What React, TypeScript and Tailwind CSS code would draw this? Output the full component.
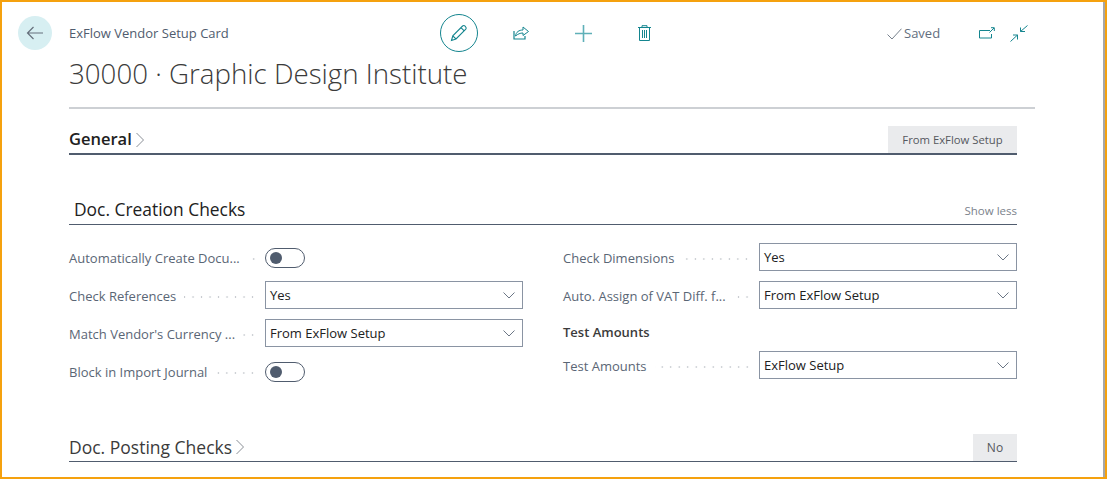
import React from "react";

function Chevron() {
  return (
    <svg width="10" height="16" viewBox="0 0 10 16" fill="none">
      <path d="M1.5 1 L8.5 8 L1.5 15" stroke="#8a8f96" strokeWidth="1" />
    </svg>
  );
}

function Toggle() {
  return (
    <div className="w-[40px] h-[20px] rounded-full border border-[#505c6e] flex items-center pl-[4px]">
      <div className="w-[12px] h-[12px] rounded-full bg-[#505c6e]" />
    </div>
  );
}

function Select({ value }: { value: string }) {
  return (
    <div className="flex-1 -mt-[2px] h-[28px] border border-[#8a94a3] flex items-center justify-between pl-[4px] pr-[7px] text-[13px] text-[#212121]">
      <span className="pt-[2px]">{value}</span>
      <svg width="12" height="7" viewBox="0 0 12 7" fill="none">
        <path d="M0.5 0.5 L6 6 L11.5 0.5" stroke="#6b7685" strokeWidth="1" />
      </svg>
    </div>
  );
}

function Field({ label, children }: { label: string; children: React.ReactNode }) {
  return (
    <div className="h-[38px] flex items-center">
      <div className="w-[196px] pt-[1px] flex items-center text-[13px] text-[#5a6675] pr-[8px] shrink-0">
        <span className="whitespace-nowrap">{label}</span>
        <span className="flex-1 ml-[8px] h-[4px] bg-[radial-gradient(circle,#c6cacf_0.8px,transparent_1.1px)] bg-[length:8.5px_4px] bg-right bg-repeat-x" />
      </div>
      {children}
    </div>
  );
}

export default function App() {
  return (
    <div className="w-[1107px] h-[479px] overflow-hidden border-2 border-[#f5a10e] font-['Open_Sans',sans-serif] bg-white">
      <div className="h-full border-r-2 border-[#a6a6a6] pl-[16px] pt-[12px]">
        {/* header */}
        <div className="flex">
          <div className="w-[34px] h-[34px] mt-[2px] rounded-full bg-[#d7eff2] flex items-center justify-center shrink-0">
            <svg width="18" height="14" viewBox="0 0 18 14" fill="none">
              <path d="M17 7 H1.5 M7.5 1 L1.5 7 L7.5 13" stroke="#66707c" strokeWidth="1.2" />
            </svg>
          </div>
          <div className="ml-[17px] flex-1">
            <div className="flex items-center h-[38px]">
              <div className="w-[371px] pt-[1px] text-[13px] text-[#505c6e] whitespace-nowrap">ExFlow Vendor Setup Card</div>
              <div className="w-[38px] h-[38px] rounded-full border border-[#14858f] flex items-center justify-center">
                <svg width="18" height="18" viewBox="0 0 18 18" fill="none">
                  <path d="M1.5 16.5 L2.8 11.8 L12.6 2 Q13.9 0.9 15.3 2.3 Q16.9 3.9 15.8 5.2 L6 15 Z M2.8 11.8 L6 15 M11 3.6 L14.2 6.8" stroke="#14858f" strokeWidth="1.1" />
                </svg>
              </div>
              <svg className="ml-[35px] -mt-[2px]" width="16" height="15" viewBox="0 0 16 15" fill="none">
                <path d="M1 6 V14 H12 V11" stroke="#14858f" strokeWidth="1.2" />
                <path d="M2.5 11 C3 7 6 5 10 5 V2 L15.5 6.5 L10 10.5 V8 C7 8 5 9 2.5 11 Z" stroke="#14858f" strokeWidth="1" />
              </svg>
              <svg className="ml-[46px]" width="17" height="17" viewBox="0 0 17 17" fill="none">
                <path d="M8.5 0 V17 M0 8.5 H17" stroke="#5fb0b8" strokeWidth="1.6" />
              </svg>
              <svg className="ml-[46px]" width="13" height="16" viewBox="0 0 13 16" fill="none">
                <path d="M0 2.5 H13 M4 2.5 V0.7 H9 V2.5 M1.5 2.5 V15.5 H11.5 V2.5 M4.5 5 V13 M6.5 5 V13 M8.5 5 V13" stroke="#14858f" strokeWidth="1" />
              </svg>
              <div className="ml-[236px] pt-[1px] flex items-center text-[13px] text-[#626e7e] gap-[2px]">
                <svg width="15" height="12" viewBox="0 0 15 12" fill="none">
                  <path d="M0.5 6.5 L5 11 L14.5 0.7" stroke="#76808c" strokeWidth="1" />
                </svg>
                <span>Saved</span>
              </div>
              <svg className="ml-[39px]" width="16" height="12" viewBox="0 0 16 12" fill="none">
                <path d="M11 3.5 H0.5 V11 H12.5 V7" stroke="#14858f" strokeWidth="1" />
                <path d="M10.5 5.5 L15 1 M12 0.7 H15.3 V4" stroke="#14858f" strokeWidth="1" />
              </svg>
              <svg className="ml-[15px]" width="18" height="17" viewBox="0 0 18 17" fill="none">
                <path d="M17.5 0.5 L10.5 6.5 M10.5 2.5 V6.5 H15 M0.5 16.5 L7.5 10 M3 10 H7.5 V14.5" stroke="#14858f" strokeWidth="1" />
              </svg>
            </div>
            <div className="mt-[2px] text-[27.7px] font-light leading-[38px] text-[#3b3b3b] whitespace-nowrap">30000 · Graphic Design Institute</div>
          </div>
        </div>
        {/* divider */}
        <div className="ml-[51px] w-[966px] h-[2px] bg-[#cdd0d4] mt-[15px]" />
        <div className="ml-[51px] w-[948px]">
          {/* General */}
          <div className="mt-[17px] h-[29px] flex items-end justify-between border-b-2 border-[#505c6e]">
            <div className="flex items-center self-center gap-[3px] text-[16.5px] font-semibold text-[#212121]">
              General <Chevron />
            </div>
            <div className="h-[27px] w-[129px] pt-[1px] bg-[#eaebed] flex items-center justify-center text-[11.3px] text-[#55585e]">From ExFlow Setup</div>
          </div>
          {/* Doc creation */}
          <div className="mt-[40px] h-[30px] flex items-center justify-between border-b border-[#505c6e]">
            <div className="ml-[5px] text-[17.4px] font-medium text-[#212121]">Doc. Creation Checks</div>
            <div className="text-[11.5px] mt-[3px] text-[#7b828b]">Show less</div>
          </div>
          <div className="mt-[14px] flex gap-[40px]">
            <div className="flex-1">
              <Field label="Automatically Create Docu..."><Toggle /></Field>
              <Field label="Check References"><Select value="Yes" /></Field>
              <Field label="Match Vendor's Currency ..."><Select value="From ExFlow Setup" /></Field>
              <Field label="Block in Import Journal"><Toggle /></Field>
            </div>
            <div className="flex-1">
              <Field label="Check Dimensions"><Select value="Yes" /></Field>
              <Field label="Auto. Assign of VAT Diff. f..."><Select value="From ExFlow Setup" /></Field>
              <div className="h-[32px] pt-[3px] flex items-center text-[13px] font-semibold text-[#3b3b3b]">Test Amounts</div>
              <Field label="Test Amounts"><Select value="ExFlow Setup" /></Field>
            </div>
          </div>
          {/* Doc posting */}
          <div className="mt-[42px] h-[29px] flex items-end justify-between border-b border-[#505c6e]">
            <div className="flex items-center self-center gap-[3px] text-[17.5px] font-medium text-[#3b3b3b]">
              Doc. Posting Checks <Chevron />
            </div>
            <div className="h-[27px] w-[44px] pt-[1px] bg-[#eaebed] flex items-center justify-center text-[12px] text-[#55585e]">No</div>
          </div>
        </div>
      </div>
    </div>
  );
}
